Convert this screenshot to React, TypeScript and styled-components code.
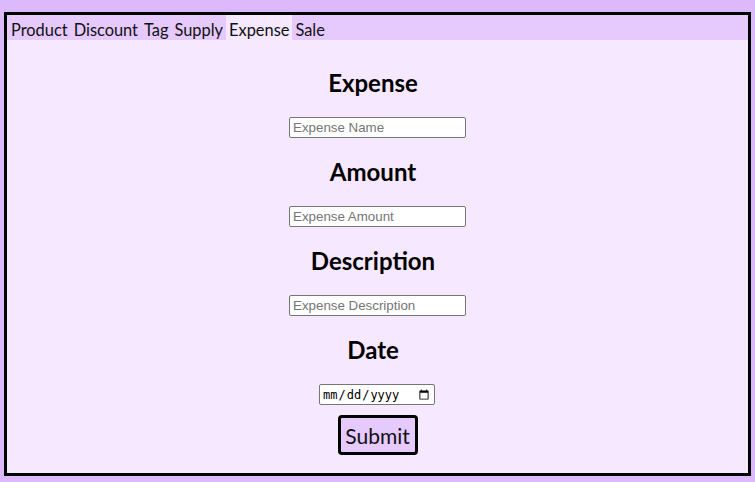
import React from "react";
import styled, { createGlobalStyle } from "styled-components";

const Global = createGlobalStyle`
  html, body { margin: 0; padding: 0; background: #dcb9fb; }
  body { font-family: "Lato", "Noto Sans", sans-serif; color: #111; }
`;

const Page = styled.div`
  padding: 12px 4px 5px 4px;
`;

const Frame = styled.div`
  border: 3px solid #000;
  background: #f5e8ff;
  display: flex;
  flex-direction: column;
`;

const NavBar = styled.nav`
  display: flex;
  background: #e6c9fd;
  height: 25px;
  padding-left: 1px;
`;

const NavItem = styled.a<{ $active?: boolean }>`
  display: flex;
  align-items: center;
  padding: 3px 3px 0;
  font-size: 16.4px;
  color: #111;
  text-decoration: none;
  background: ${(p) => (p.$active ? "#f5e8ff" : "transparent")};
`;

const Form = styled.form`
  display: flex;
  flex-direction: column;
  align-items: center;
  padding: 9px 0 18px;
`;

const Heading = styled.h2`
  font-size: 24px;
  font-weight: 700;
  line-height: 28px;
  margin: 20px 0;
  padding-right: 9px;
  color: #000;
`;

const TextInput = styled.input`
  box-sizing: border-box;
  width: 177px;
  height: 21px;
  padding: 1px 3px;
  border: 1px solid #767676;
  border-radius: 2px;
  background: #fff;
  font-family: "Liberation Sans", Arial, sans-serif;
  font-size: 13.33px;
  color: #000;
  &::placeholder { color: #757575; }
`;

const DateInput = styled.input`
  box-sizing: border-box;
  width: 116px;
  height: 21px;
  padding: 1px 2px;
  margin-right: 1px;
  border: 1px solid #767676;
  border-radius: 2px;
  background: #fff;
  font-family: "DejaVu Sans Mono", monospace;
  font-size: 12px;
  color: #000;
`;

const SubmitButton = styled.button`
  margin-top: 10px;
  box-sizing: border-box;
  width: 80px;
  height: 40px;
  border: 3px solid #000;
  border-radius: 4px;
  background: #e6c9fd;
  font-family: "Lato", "Noto Sans", sans-serif;
  font-size: 21px;
  color: #111;
  padding: 0;
  cursor: pointer;
`;

const tabs = ["Product", "Discount", "Tag", "Supply", "Expense", "Sale"];

export default function App() {
  return (
    <>
      <Global />
      <Page>
        <Frame>
          <NavBar>
            {tabs.map((t) => (
              <NavItem key={t} href="#" $active={t === "Expense"}>
                {t}
              </NavItem>
            ))}
          </NavBar>
          <Form onSubmit={(e) => e.preventDefault()}>
            <Heading>Expense</Heading>
            <TextInput placeholder="Expense Name" />
            <Heading>Amount</Heading>
            <TextInput placeholder="Expense Amount" />
            <Heading>Description</Heading>
            <TextInput placeholder="Expense Description" />
            <Heading>Date</Heading>
            <DateInput type="date" />
            <SubmitButton type="submit">Submit</SubmitButton>
          </Form>
        </Frame>
      </Page>
    </>
  );
}
